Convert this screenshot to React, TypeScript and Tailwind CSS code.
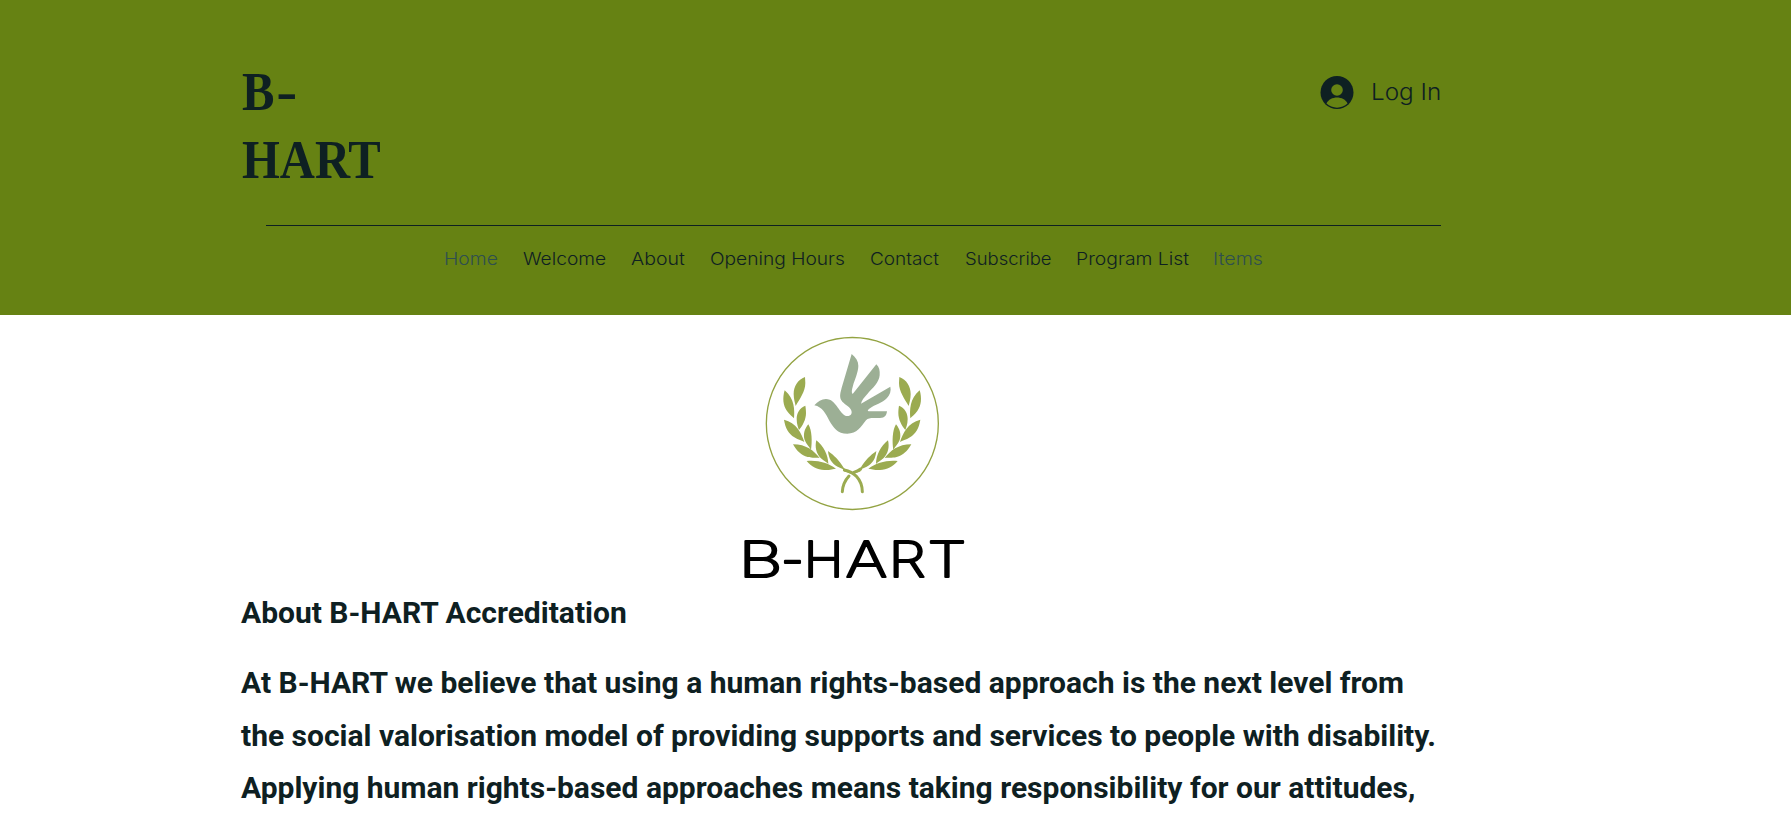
const NAV = [
  { label: "Home", box: "w-[79px] text-[#2f4f4f]", fit: "scale-x-[1.12]" },
  { label: "Welcome", box: "w-[108px]", fit: "scale-x-[1.11]" },
  { label: "About", box: "w-[79px]", fit: "scale-x-[1.13]" },
  { label: "Opening Hours", box: "w-[160px]", fit: "scale-x-[1.11]" },
  { label: "Contact", box: "w-[95px]", fit: "scale-x-[1.1]" },
  { label: "Subscribe", box: "w-[111px]", fit: "scale-x-[1.07]" },
  { label: "Program List", box: "w-[137px]", fit: "scale-x-[1.12]" },
  { label: "Items", box: "w-[60px] text-[#2f4f4f]", fit: "scale-x-[1.14]" },
];

const WORDMARK = [
  { ch: "B", x: 8.6, sx: 1.4 },
  { ch: "-", x: 51, sx: 1.05 },
  { ch: "H", x: 73.8, sx: 1.1 },
  { ch: "A", x: 115.6, sx: 1.3 },
  { ch: "R", x: 158.4, sx: 1.22 },
  { ch: "T", x: 197.6, sx: 1.27 },
];

function Branch() {
  return (
    <g fill="#9bab50">
      <path d="M150 156C128 165 116 183 116 207C116 222 120 234 122 243C134 222 151 200 151 174Z" />
      <path d="M89 196C82 219 84 242 96 258C104 269 113 275 117 280C119 256 119 220 89 196Z" />
      <path d="M151 242C133 249 125 265 125 282C125 298 130 309 132 315C143 302 153 284 153 264C153 255 152 248 151 242Z" />
      <path d="M87 284C91 310 101 326 118 337C130 345 141 347 148 351C140 326 124 292 87 284Z" />
      <path d="M160 298C148 312 144 329 149 345C154 359 164 366 168 375C172 351 171 315 160 298Z" />
      <path d="M114 358C126 379 139 391 158 396C173 400 185 397 194 399C176 377 154 358 114 358Z" />
      <path d="M184 346C179 367 184 386 197 399C207 408 216 411 220 417C220 391 205 362 184 346Z" />
      <path d="M155 408C169 425 187 434 208 435C223 436 235 431 243 431C217 413 190 405 155 408Z" />
      <path d="M219 378C221 400 230 416 248 425C262 432 273 435 281 438L292 442L287 446L266 439C268 436 273 433 266 428C252 405 237 391 219 378Z" />
    </g>
  );
}

function Emblem() {
  return (
    <svg className="block h-[200px] w-[200px]" viewBox="0 0 600 600" aria-hidden="true">
      <circle cx="292" cy="295.500" r="258" fill="none" stroke="#93a342" strokeWidth="4" />
      <path
        fill="#9caf95"
        d="M290 87C303 98 310 109 310 122C310 142 299 163 294 182C290 195 289 203 293 207L364 118C373 126 375 137 374 151C372 173 354 188 337 207C328 217 320 226 318 236L406 185C409 197 405 209 396 219C382 234 359 239 345 250C339 254 336 258 341 259H396C395 270 390 279 375 279C357 280 342 276 333 286C317 307 306 326 277 326C247 326 235 307 223 287C212 267 203 246 178 241C191 227 206 218 224 224C246 232 257 272 277 273C288 273 293 264 288 254C281 242 266 238 259 226C252 214 257 201 260 188Z"
      />
      <Branch />
      <g transform="translate(583 0) scale(-1 1)">
        <Branch />
      </g>
      <g fill="none" stroke="#9bab50" strokeWidth="9" strokeLinecap="round">
        <path d="M262 500C263 480 270 466 282 453M296 442C304 440 310 438 317 432" />
        <path d="M268 435C295 440 321 461 322 500" />
      </g>
    </svg>
  );
}

function Wordmark() {
  return (
    <svg className="block h-[70px] w-[250px]" viewBox="0 0 250 70">
      <g
        className="fill-black stroke-black font-['Inter','Liberation_Sans',sans-serif] text-[49px] font-extralight"
        strokeWidth="2.300"
        strokeLinejoin="round"
      >
        {WORDMARK.map((l) => (
          <text key={l.ch} transform={`translate(${l.x} 56.5) scale(${l.sx} 1)`} vectorEffect="non-scaling-stroke">
            {l.ch}
          </text>
        ))}
      </g>
    </svg>
  );
}

export default function App() {
  return (
    <div className="h-[817px] overflow-hidden bg-white text-[#0e2022]">
      <header className="h-[315px] bg-[#668213]">
        <div className="ml-[242px] flex h-[225px] w-[1200px] justify-between">
          <h1 className="w-[160px] origin-left scale-x-[0.9] pt-[58px] font-['Liberation_Serif',serif] text-[54px] leading-[68px] font-bold">
            B<span className="ml-[2px] inline-block origin-left scale-x-[1.3]">-</span>
            <br />
            HART
          </h1>
          <div className="mt-[75px] flex h-[34px] items-center">
            <svg className="h-[34px] w-[34px]" viewBox="0 0 34 34" aria-hidden="true">
              <circle cx="17" cy="17.500" r="16.500" fill="#0e2022" />
              <circle cx="17" cy="15" r="5.800" fill="#668213" />
              <path d="M6.500 28.500C10 20.500 24 20.500 27.500 28.500C22 34 12 34 6.500 28.500Z" fill="#668213" />
            </svg>
            <span className="ml-[17px] w-[71px] origin-left scale-x-[1.08] whitespace-nowrap font-['Inter','Liberation_Sans',sans-serif] text-[22.5px] font-light">
              Log In
            </span>
          </div>
        </div>
        <div className="ml-[266px] h-px w-[1175px] bg-[#0e2022]" />
        <nav className="ml-[443.500px] flex h-[65px] items-center font-['Inter','Liberation_Sans',sans-serif] text-[17.3px] font-light">
          {NAV.map((n) => (
            <a key={n.label} className={`shrink-0 whitespace-nowrap ${n.box}`}>
              <span className={`inline-block origin-left ${n.fit}`}>{n.label}</span>
            </a>
          ))}
        </nav>
      </header>
      <main>
        <div className="ml-[755px] pt-[10px]">
          <Emblem />
        </div>
        <div className="-mt-[5px] ml-[730px]">
          <Wordmark />
        </div>
        <div className="-mt-[3px] ml-[241px] w-[1208px] font-['Roboto',sans-serif] text-[30px] leading-[52.5px] font-bold">
          <h2>About B-HART Accreditation</h2>
          <p className="mt-[17.500px] whitespace-nowrap">
            At B-HART we believe that using a human rights-based approach is the next level from
            <br />
            the social valorisation model of providing supports and services to people with disability.
            <br />
            Applying human rights-based approaches means taking responsibility for our attitudes,
          </p>
        </div>
      </main>
    </div>
  );
}
